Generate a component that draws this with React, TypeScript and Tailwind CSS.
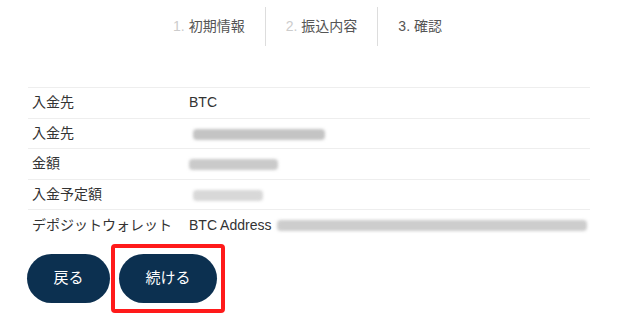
import React from 'react';

const font = { fontFamily: '"Liberation Sans", "Noto Sans CJK JP", sans-serif' };

const Blur: React.FC<{ w: string; tone?: string }> = ({ w, tone = 'bg-[#c4c4c4]' }) => (
  <span className={`inline-block h-[11px] ${w} ${tone} blur-[1.5px] rounded-sm align-middle`} />
);

export default function App() {
  const rows: { label: string; value: React.ReactNode }[] = [
    { label: '入金先', value: 'BTC' },
    { label: '入金先', value: <span className="pl-[4px]"><Blur w="w-[132px]" /></span> },
    { label: '金額', value: <Blur w="w-[89px]" tone="bg-[#cacaca]" /> },
    { label: '入金予定額', value: <span className="pl-[4px]"><Blur w="w-[70px]" tone="bg-[#d8d8d8]" /></span> },
    {
      label: 'デポジットウォレット',
      value: (
        <span className="flex items-center gap-[6px]">
          BTC Address
          <Blur w="w-[310px]" tone="bg-[#cdcdcd]" />
        </span>
      ),
    },
  ];

  return (
    <div className="w-[619px] h-[330px] bg-white text-[#333] overflow-hidden" style={font}>
      {/* Steps */}
      <div className="flex justify-center pt-[7px] pr-[4px]">
        <div className="flex items-center h-[39px] pl-[20px] pr-[20px] text-[14px]">
          <span className="text-[#ccc] mr-[4px]">1.</span>
          <span className="text-[#555]">初期情報</span>
        </div>
        <div className="flex items-center h-[39px] px-[20px] border-l border-[#ddd] text-[14px]">
          <span className="text-[#ccc] mr-[4px]">2.</span>
          <span className="text-[#555]">振込内容</span>
        </div>
        <div className="flex items-center h-[39px] px-[20px] border-l border-[#ddd] text-[14px] text-[#555]">
          <span className="mr-[4px]">3.</span>
          <span>確認</span>
        </div>
      </div>

      {/* Table */}
      <div className="ml-[28px] mr-[29px] mt-[41px] border-t border-[#eee]">
        {rows.map((r, i) => (
          <div
            key={i}
            className={`flex items-center h-[30.5px] text-[14px] ${i < rows.length - 1 ? 'border-b border-[#eee]' : ''}`}
          >
            <div className="w-[161px] pl-[4px] text-[#333]">{r.label}</div>
            <div className="flex-1 text-[#333]">{r.value}</div>
          </div>
        ))}
      </div>

      {/* Buttons */}
      <div className="flex items-center gap-[1px] ml-[27px] mt-[3px]">
        <button className="w-[83px] h-[49px] rounded-full bg-[#0c3050] text-white text-[15px]">戻る</button>
        <div className="px-[4px] py-[6px] border-[4px] border-[#ff1a1a] rounded-[4px]">
          <button className="block w-[98px] h-[49px] rounded-full bg-[#0c3050] text-white text-[15px]">続ける</button>
        </div>
      </div>
    </div>
  );
}
